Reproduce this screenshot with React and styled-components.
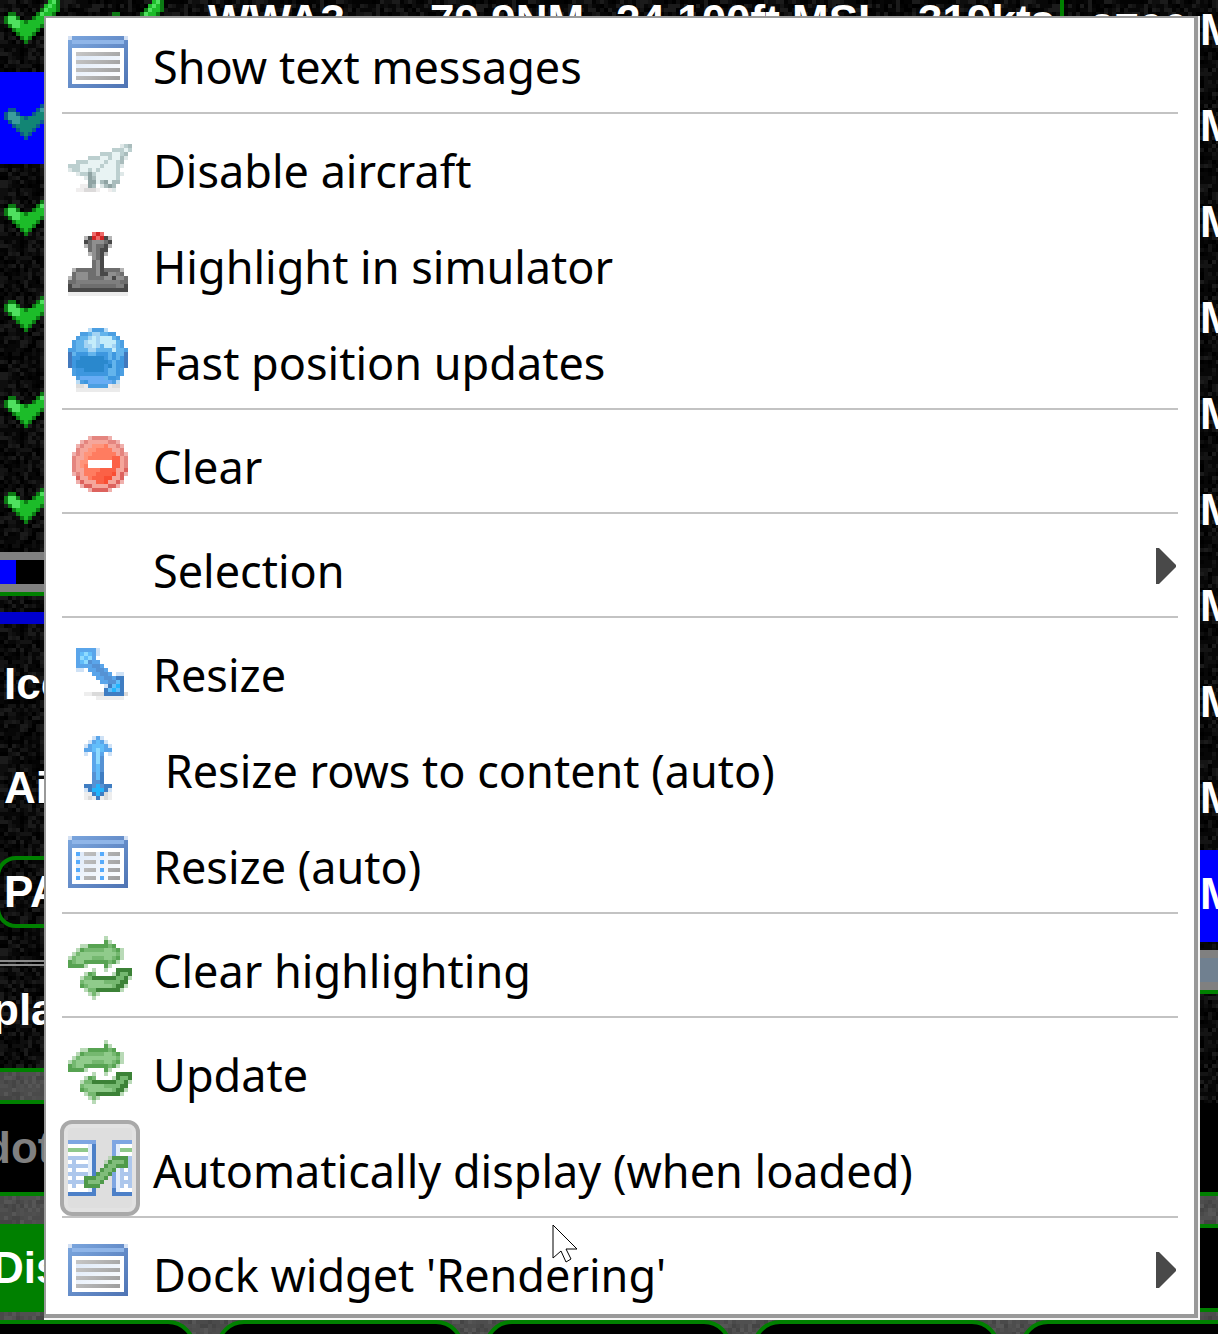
import React from "react";
import styled, { createGlobalStyle, css } from "styled-components";

/* ---------- textures ---------- */

function noiseTexture(base, shades, cells, seed) {
  let state = seed;
  const next = () => {
    state = (state * 1664525 + 1013904223) >>> 0;
    return state / 4294967296;
  };
  const paths = shades.map(() => "");
  for (let y = 0; y < cells; y += 1) {
    for (let x = 0; x < cells; x += 1) {
      const pick = Math.floor(next() * (shades.length + 2));
      if (pick < shades.length) paths[pick] += `M${x} ${y}h1v1h-1z`;
    }
  }
  const size = cells * 4;
  const body = shades.map((s, i) => `<path fill="${s}" d="${paths[i]}"/>`).join("");
  const svg = `<svg xmlns="http://www.w3.org/2000/svg" width="${size}" height="${size}" viewBox="0 0 ${cells} ${cells}" shape-rendering="crispEdges"><rect width="${cells}" height="${cells}" fill="${base}"/>${body}</svg>`;
  return `url("data:image/svg+xml,${encodeURIComponent(svg)}")`;
}

const darkNoise = noiseTexture("#070707", ["#000000", "#0e0e0e", "#141414", "#1b1b1b", "#030303"], 48, 77);
const greyNoise = noiseTexture("#4a4a4a", ["#444444", "#505050", "#565656", "#4d4d4d"], 48, 1234);

const GREEN = "#008000";
const BLUE = "#0000ff";

/* ---------- pixel icons ---------- */

function PixelIcon({ rows, palette }) {
  const rects = [];
  rows.forEach((row, y) => {
    let x = 0;
    while (x < row.length) {
      const c = row[x];
      let end = x + 1;
      while (end < row.length && row[end] === c) end += 1;
      if (c !== ".") {
        rects.push(<rect key={`${x}-${y}`} x={x} y={y} width={end - x} height="1" fill={palette[c]} />);
      }
      x = end;
    }
  });
  return (
    <IconSvg viewBox="0 0 16 16" aria-hidden="true">
      {rects}
    </IconSvg>
  );
}

const IconSvg = styled.svg`
  display: block;
  width: 64px;
  height: 64px;
  shape-rendering: crispEdges;
`;

const checkRows = [
  "................",
  "............dd..",
  "............mld.",
  "...........mlmd.",
  "..........dlmmd.",
  "..dd.....dlmmd..",
  ".dlld...dmmmd...",
  ".dlllmdmmmmd....",
  "..dllmmmmmd.....",
  "...dmmmmmd......",
  "....dmmmd.......",
  ".....dmd........",
  "......d.........",
];
const checkGreen = { d: "#0c7a14", m: "#1cbc29", l: "#4fe05f" };
const checkTeal = { d: "#0b5a8c", m: "#128574", l: "#3a9c9c" };

const planeRows = [
  "................",
  "................",
  ".............pab",
  "...........aaaqa",
  "........aaaqqab.",
  ".....aaaqqaqqbp.",
  "..aaaqqqqaqqab..",
  "aaaqqqqqaqqqap..",
  "paaqqaqaqqqqa...",
  "..paacaqqqqqap..",
  "....pcbqqqqqa...",
  ".....ccqbcqbb...",
  "...sscb.pbcb....",
  "..ssttts..sp....",
];
const planePalette = { p: "#dfe8e8", q: "#e8f3f3", a: "#bccfcf", b: "#a9bcbc", c: "#8fa3a3", s: "#f0eeee", t: "#dcdada" };

const joystickRows = [
  "......rRr.......",
  "....ekRrRke.....",
  "....kmlllmk.....",
  "....emlmmke.....",
  ".....mlmkk......",
  ".....elmke......",
  "......lmk.......",
  "......mlk.......",
  "......mlk.......",
  ".emmmmmlkmmmme..",
  ".mlllmmlkkllnm..",
  "emlllmmmmllkllm.",
  "mmnnnnnnnnnnnmm.",
  "knnmmmmmmmmmnnk.",
  "kkkkkkkkkkkkkkk.",
  "sssssssssssssss.",
];
const joystickPalette = { r: "#ee6a6a", R: "#d32626", e: "#b5b5b5", k: "#484848", m: "#6e6e6e", l: "#8f8f8f", n: "#7e7e7e", s: "#ececec" };

const globeRows = [
  ".....aeeea......",
  "...eebccbbee....",
  "..ebbcwcwwwbe...",
  ".ebbcwwcwwwwbe..",
  ".ebbccwcbwwcbe..",
  "eebbbccbbbbwbbe.",
  "fbmmmbbmmmbmbbf.",
  "fmmnnnnnnmbmbmf.",
  "fmnnnnnnnnmbmmf.",
  "fmnnnnnnnmnbmmf.",
  ".emmnnnnnmbbme..",
  ".emmmmmmmmbbme..",
  "..ellllllbmme...",
  "..aemllllllea...",
  "..ttseeeeestt...",
  "..sssssssssss...",
];
const globePalette = { a: "#b9dcf6", e: "#4c9fe2", b: "#63b4ec", c: "#a3d3f3", w: "#c4ecfa", m: "#3d97df", n: "#2a88cd", f: "#4279bd", l: "#67acf4", s: "#ebebeb", t: "#dddddd" };

const clearRows = [
  "................",
  ".....reeeer.....",
  "...reiiiiieer...",
  "..reiiiaabiiier.",
  "..eiiaabbbbiie..",
  ".reiaabbbbbbier.",
  ".eiiabbbbbbccie.",
  ".eiaawwwwwwccie.",
  ".eiabwwwwwwccie.",
  ".eiibbbbcccciig.",
  ".reibbbccccdigr.",
  "..giibcccddiig..",
  "..rgiiiccdiigr..",
  "...rggiiiiggr...",
  ".....rggggr.....",
];
clearRows[3] = "..reiiaaabiier..";
const clearPalette = { r: "#f0b0ac", e: "#e4857f", i: "#f5a69b", a: "#ff947a", b: "#ff7c60", c: "#fb6146", d: "#f94e33", g: "#dd625d", w: "#ffffff" };

const resizeRows = [
  "................",
  "................",
  "..bbbbbp........",
  "..bclcbp........",
  "..blclb.........",
  "..bclmbb........",
  "..bbbbmmb.......",
  "..pp.bbmmb......",
  "......bbmmb.pp..",
  ".......bbmmbdd..",
  "........bbmmcd..",
  ".........pdcCd..",
  ".........dcCcd..",
  "....sstttdddddt.",
  ".......sssssss..",
];
const arrowPalette = { b: "#5aa5ea", c: "#62bdfa", l: "#8edbff", m: "#5592d4", d: "#3f7dc2", C: "#22b4fc", p: "#cfe2f6", s: "#eeeeee", t: "#dadada" };

const resizeVerticalRows = [
  "......pbp.......",
  ".....pbcbp......",
  "....pbcccbp.....",
  "....bbclcbb.....",
  "....p.blb.p.....",
  "......blm.......",
  "......blm.......",
  "......bcm.......",
  "......bcm.......",
  "......mcd.......",
  "......mcd.......",
  "......mmd.......",
  "....ddmCmdd.....",
  "....pdCCCdp.....",
  "....ssdCdts.....",
  "....stsdsts.....",
];

const refreshRows = [
  ".........p......",
  ".........dp.....",
  "...ppdddddmd....",
  "..pdmmmmmllmdp..",
  ".pmlllllllllmp..",
  "pmllllmmmllmdp..",
  "dmllddddddmdp...",
  "ddddp....dp.....",
  "......p..p..DDDD",
  "....pdm....pDmmD",
  "...pmmDDDDDDmmDp",
  "...mlllllmmmmDD.",
  "...dmllllllmDDp.",
  "....pmmDDDDDDp..",
  ".....pmp........",
  "......p.........",
];
const refreshPalette = { p: "#b9dab7", d: "#57a352", m: "#75b870", l: "#90cb8b", D: "#3c8237" };

function WindowIcon({ columns }) {
  const lines = [5, 7, 9, 11];
  return (
    <IconSvg viewBox="0 0 16 16" aria-hidden="true">
      <defs>
        <linearGradient id="winFrame" x1="0" y1="0" x2="1" y2="1">
          <stop offset="0" stopColor="#7ba6de" />
          <stop offset="1" stopColor="#4f74b4" />
        </linearGradient>
        <linearGradient id="winPane" x1="0" y1="0" x2="1" y2="1">
          <stop offset="0" stopColor="#dce8f8" />
          <stop offset="1" stopColor="#ffffff" />
        </linearGradient>
        <linearGradient id="winLine" gradientUnits="userSpaceOnUse" x1="2" y1="5" x2="12" y2="12">
          <stop offset="0" stopColor="#c6c6c6" />
          <stop offset="1" stopColor="#a0a0a0" />
        </linearGradient>
      </defs>
      <rect x="0" y="1" width="15" height="13" fill="url(#winFrame)" />
      <rect x="1" y="2" width="13" height="1" fill="#8fb5e8" />
      <rect x="0" y="1" width="1" height="1" fill="#d3e0f3" />
      <rect x="14" y="1" width="1" height="1" fill="#d3e0f3" />
      <rect x="1" y="4" width="13" height="9" fill="#ffffff" />
      <rect x="2" y="5" width="11" height="7" fill="url(#winPane)" />
      {lines.map((y) =>
        columns ? (
          <g key={y}>
            <rect x="2" y={y} width="1" height="1" fill="#56abfc" />
            <rect x="4" y={y} width="3" height="1" fill="url(#winLine)" />
            <rect x="8" y={y} width="1" height="1" fill="#56abfc" />
            <rect x="10" y={y} width="3" height="1" fill="url(#winLine)" />
          </g>
        ) : (
          <rect key={y} x="2" y={y} width="11" height="1" fill="url(#winLine)" />
        )
      )}
    </IconSvg>
  );
}

const linkRows = [
  "................",
  "bbbbbbb....bbbbb",
  "wwwwwvc....bvwww",
  "gggggvc....bvggg",
  "wwwwwvc....bvwww",
  "tttttvc...pGGGGt",
  "wtwwwvc..pGhhhGt",
  "tttttvc..GhhGGGt",
  "wtwwwvc.GhhGvtwt",
  "tttttvcGhhGbvttt",
  "wtwwGGGhhG.bvtwt",
  "ttttGhhhG..bvttt",
  "wtwwGGGG...bvtwt",
  "wwwwwvc....cvwww",
  "ccccccc....ccccc",
];
const linkPalette = { b: "#7ea6e2", c: "#4c80c8", v: "#e3edfa", w: "#ffffff", g: "#8fc98b", t: "#adc7ec", G: "#4f9a4a", h: "#80bd7a", p: "#b9d3b7" };

/* ---------- page ---------- */

const GlobalStyle = createGlobalStyle`
  * { box-sizing: border-box; }
  html, body { margin: 0; background: #000; }
  button, input { font: inherit; color: inherit; }
`;

const Page = styled.main`
  position: relative;
  display: flex;
  flex-direction: column;
  height: 100vh;
  overflow: hidden;
  background: ${darkNoise};
  color: #fff;
  font: bold 44px/48px "Liberation Sans", Arial, sans-serif;
  white-space: nowrap;
`;

const Panels = styled.div`
  display: grid;
  grid-template-columns: minmax(0, 1fr) 158px;
  flex: none;
`;

const Panel = styled.section`
  display: flex;
  flex-direction: column;
  min-width: 0;
  overflow: hidden;
  ${(p) => p.$divided && css`
    box-shadow: inset 4px 0 0 ${GREEN};
  `}
`;

const selectedFill = css`
  background: linear-gradient(${BLUE}, ${BLUE}) 0 0 / 100% 92px no-repeat;
`;

const TrafficRow = styled.div`
  display: grid;
  grid-template-columns: 104px 104px 222px 186px 302px 1fr;
  align-content: end;
  align-items: center;
  height: ${(p) => (p.$cut ? 72 : 96)}px;
  padding-bottom: 16px;
  ${(p) => p.$selected && selectedFill}

  span { padding-bottom: 6px; }
`;

const FrequencyRow = styled.div`
  display: flex;
  align-items: flex-end;
  height: ${(p) => (p.$cut ? 82 : 96)}px;
  padding: 0 0 28px 30px;
  ${(p) => p.$selected && selectedFill}
`;

const ScrollTrack = styled.div`
  height: 44px;
  margin-top: ${(p) => (p.$spaced ? 4 : 0)}px;
  border: solid #808080;
  border-width: 8px 0;
  border-bottom: 0;
  background: ${(p) => p.$fill};
  box-shadow: inset 0 -4px 0 ${GREEN}, inset 0 -12px 0 #808080;
`;

const ScrollThumb = styled.div`
  width: 16px;
  height: 24px;
  background: ${BLUE};
`;

const Tab = styled.div`
  height: 12px;
  margin: 16px 0 8px;
  background: #0000cd;
`;

const FormRow = styled.div`
  display: flex;
  align-items: center;
  height: 104px;
  padding-left: 4px;
`;

const RoundButton = styled.button`
  width: 400px;
  height: 72px;
  margin-left: -8px;
  padding: 0 4px;
  border: 4px solid ${GREEN};
  border-radius: 20px;
  background: transparent;
  text-align: left;
`;

const Rule = styled.hr`
  width: 100%;
  height: 6px;
  margin: 16px 0 0;
  border: 0;
  border-top: 6px double #8c8c8c;
`;

const SectionTitle = styled.div`
  height: 102px;
  padding-top: 20px;
  text-indent: -8px;
`;

const Toolbar = styled.div`
  height: ${(p) => p.$height}px;
  border-top: ${(p) => (p.$edge ? `4px solid ${GREEN}` : "0")};
  background: ${greyNoise};
`;

const Field = styled.input`
  height: 96px;
  padding: 0;
  border: solid ${GREEN};
  border-width: 4px 0;
  border-radius: 0;
  background: #000;
  color: #808080;
  text-indent: -16px;
`;

const FillButton = styled.button`
  height: 88px;
  padding: 0;
  border: 0;
  background: ${GREEN};
  text-align: left;
  text-indent: -8px;
`;

const Well = styled.div`
  height: 93px;
  margin-top: 109px;
  border-bottom: 4px solid ${GREEN};
  background: #000;
`;

const OutlineButton = styled.button`
  height: 88px;
  border: solid ${GREEN};
  border-width: 4px 0;
  background: #000;
`;

const ButtonBar = styled.div`
  display: flex;
  gap: 20px;
  margin-left: -52px;
  background: ${greyNoise};
`;

const BarButton = styled.button`
  flex: none;
  width: 248px;
  height: 80px;
  border: 4px solid ${GREEN};
  border-radius: 28px;
  background: #000;
`;

/* ---------- context menu ---------- */

const Menu = styled.div`
  position: absolute;
  top: 16px;
  left: 44px;
  right: 18px;
  background: #fff;
  box-shadow: inset -2px -2px 0 #f4f4f4, inset 2px 2px 0 #999, inset -6px -6px 0 #999;
  color: #000;
  font: 400 45px/64px "Noto Sans", "Open Sans", sans-serif;
`;

const MenuItem = styled.button`
  display: flex;
  align-items: center;
  width: 100%;
  height: 96px;
  padding: 0 24px 0 16px;
  border: 0;
  background: none;
  text-align: left;
`;

const IconSlot = styled.span`
  display: flex;
  align-items: center;
  flex: none;
  width: 80px;
  height: 96px;
  padding-left: 4px;
  border: 4px solid transparent;
  border-radius: 12px;
  ${(p) => p.$checked && css`
    border-color: #a9a9a9;
    background: #dedede;
    box-shadow: inset 0 0 0 4px #e2e2e2;
  `}
`;

const ItemLabel = styled.span`
  flex: 1;
  padding: 6px 0 0 13px;
  white-space: pre;
`;

const Separator = styled.hr`
  height: 2px;
  margin: 0 22px 6px 18px;
  border: 0;
  background: #c3c3c3;
`;

const SubmenuArrow = styled.svg`
  width: 20px;
  height: 36px;
  margin-bottom: 4px;
  fill: #494949;
`;

const Pointer = styled.svg`
  position: absolute;
  left: 508px;
  bottom: 56px;
  width: 28px;
  height: 40px;
  pointer-events: none;
`;

const refreshIcon = <PixelIcon rows={refreshRows} palette={refreshPalette} />;

const groups = [
  [{ label: "Show text messages", icon: <WindowIcon /> }],
  [
    { label: "Disable aircraft", icon: <PixelIcon rows={planeRows} palette={planePalette} /> },
    { label: "Highlight in simulator", icon: <PixelIcon rows={joystickRows} palette={joystickPalette} /> },
    { label: "Fast position updates", icon: <PixelIcon rows={globeRows} palette={globePalette} /> },
  ],
  [{ label: "Clear", icon: <PixelIcon rows={clearRows} palette={clearPalette} /> }],
  [{ label: "Selection", submenu: true }],
  [
    { label: "Resize", icon: <PixelIcon rows={resizeRows} palette={arrowPalette} /> },
    { label: " Resize rows to content (auto)", icon: <PixelIcon rows={resizeVerticalRows} palette={arrowPalette} /> },
    { label: "Resize (auto)", icon: <WindowIcon columns /> },
  ],
  [{ label: "Clear highlighting", icon: refreshIcon }],
  [
    { label: "Update", icon: refreshIcon },
    { label: "Automatically display (when loaded)", icon: <PixelIcon rows={linkRows} palette={linkPalette} />, checked: true },
  ],
  [{ label: "Dock widget 'Rendering'", icon: <WindowIcon />, submenu: true }],
];

function ContextMenu() {
  return (
    <Menu role="menu">
      {groups.map((items, g) => (
        <React.Fragment key={items[0].label}>
          {g > 0 && <Separator />}
          {items.map((item) => (
            <MenuItem
              key={item.label}
              type="button"
              role={item.checked ? "menuitemcheckbox" : "menuitem"}
              aria-checked={item.checked}
              aria-haspopup={item.submenu ? "menu" : undefined}
            >
              <IconSlot $checked={item.checked}>{item.icon}</IconSlot>
              <ItemLabel>{item.label}</ItemLabel>
              {item.submenu && (
                <SubmenuArrow viewBox="0 0 20 36" aria-hidden="true">
                  <path d="M0 0h3l17 17v2L3 36H0z" />
                </SubmenuArrow>
              )}
            </MenuItem>
          ))}
        </React.Fragment>
      ))}
      <Pointer viewBox="0 0 28 40" aria-hidden="true">
        <path d="M1 1L25 25H14L19 35L14 38L9 27L1 34Z" fill="#fff" stroke="#000" strokeWidth="1" />
      </Pointer>
    </Menu>
  );
}

const aircraft = [0, 1, 2, 3, 4, 5];
const frequencies = [0, 1, 2, 3, 4, 5, 6, 7, 8, 9];

export default function App() {
  return (
    <Page>
      <GlobalStyle />
      <Panels>
        <Panel>
          {aircraft.map((n) => (
            <TrafficRow key={n} $cut={n === 0} $selected={n === 1}>
              <PixelIcon rows={checkRows} palette={n === 1 ? checkTeal : checkGreen} />
              {n === 0 && (
                <>
                  <PixelIcon rows={checkRows} palette={checkGreen} />
                  <span>WWA3</span>
                  <span>79.9NM</span>
                  <span>24,100ft MSL</span>
                  <span>319kts</span>
                </>
              )}
            </TrafficRow>
          ))}
          <ScrollTrack $fill="#000">
            <ScrollThumb />
          </ScrollTrack>
          <Tab />
          <FormRow>Icons</FormRow>
          <FormRow>Aircraft</FormRow>
          <FormRow>
            <RoundButton type="button">PAR</RoundButton>
          </FormRow>
          <Rule />
          <SectionTitle>play</SectionTitle>
          <Toolbar $edge $height={32} />
          <Field aria-label="Display mode" defaultValue="dots" />
          <Toolbar $height={28} />
          <FillButton type="button">Display</FillButton>
          <Toolbar $height={8} />
        </Panel>
        <Panel $divided>
          {frequencies.map((n) => (
            <FrequencyRow key={n} $cut={n === 0} $selected={n === 9}>
              2700 M
            </FrequencyRow>
          ))}
          <ScrollTrack $spaced $fill="#708090" />
          <Well />
          <Toolbar $height={28} />
          <OutlineButton type="button" aria-label="Apply" />
          <Toolbar $height={8} />
        </Panel>
      </Panels>
      <ButtonBar>
        {["Aircraft", "Airports", "Clients", "Messages", "Settings"].map((name) => (
          <BarButton key={name} type="button" aria-label={name} />
        ))}
      </ButtonBar>
      <ContextMenu />
    </Page>
  );
}
